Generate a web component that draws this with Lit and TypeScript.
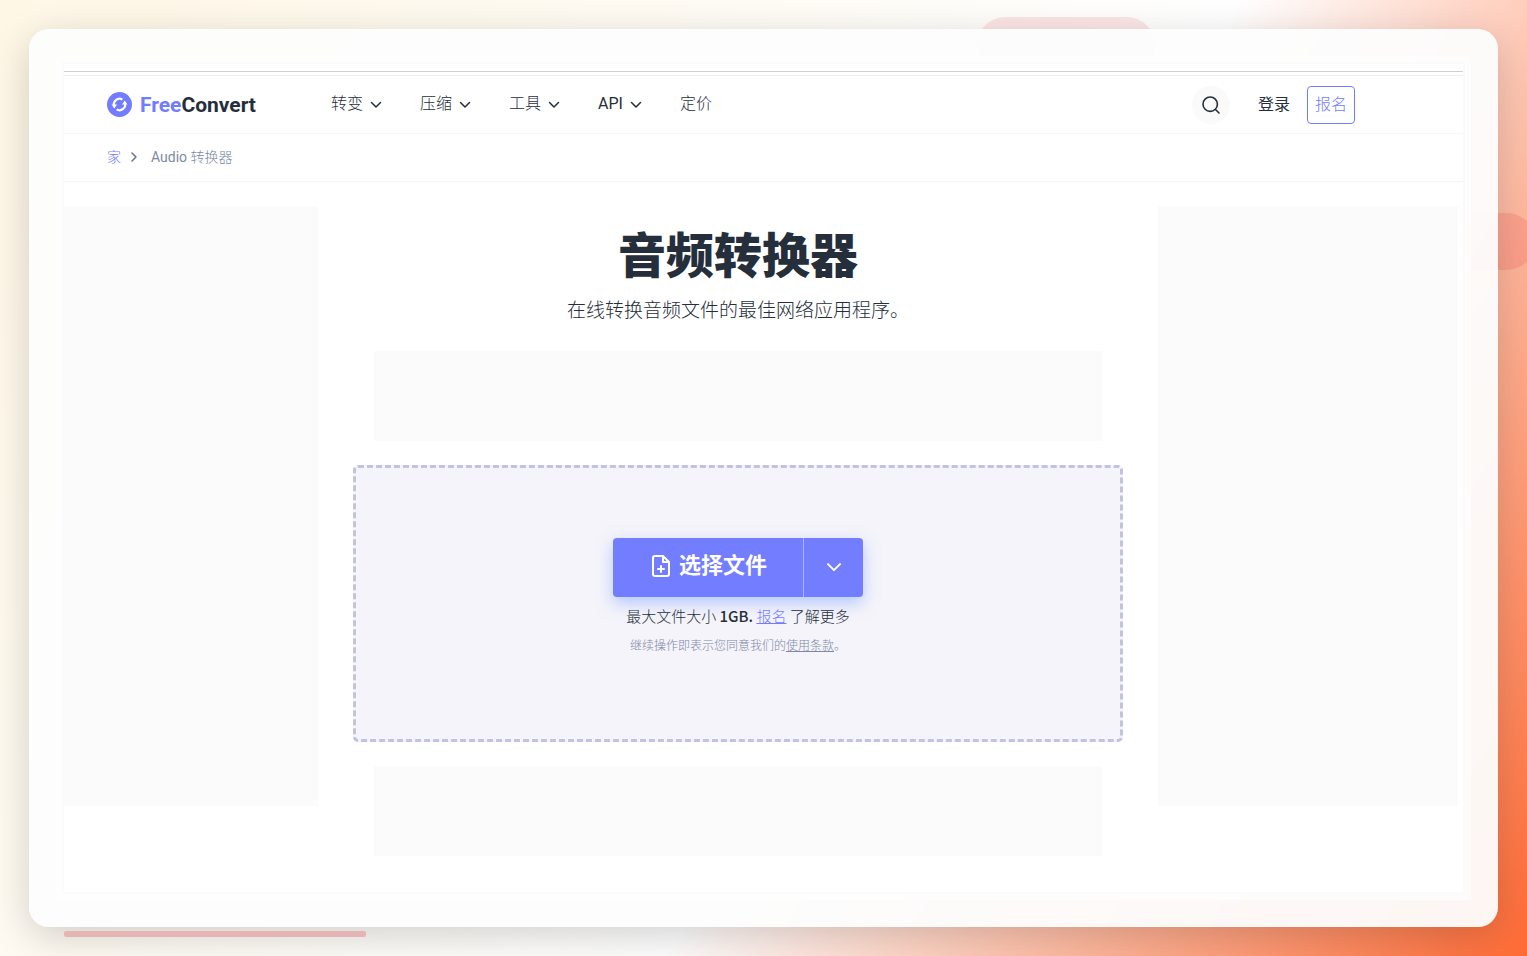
import { LitElement, html, css } from "lit";
import { customElement } from "lit/decorators.js";

const chevron = html`<svg class="chevron" viewBox="0 0 12 8" aria-hidden="true">
  <path d="M1.500 1.500 6 6l4.500-4.500" fill="none" stroke="currentColor" stroke-width="1.500" stroke-linecap="round" stroke-linejoin="round" />
</svg>`;

const menus = [
  { label: "转变", open: true },
  { label: "压缩", open: true },
  { label: "工具", open: true },
  { label: "API", open: true },
  { label: "定价", open: false },
];

@customElement("app-root")
export class AppRoot extends LitElement {
  static styles = css`
    :host {
      display: block;
      font-family: Roboto, "Noto Sans CJK SC", sans-serif;
      font-size: 16px;
      line-height: 24px;
      color: #252e3b;
    }
    *, *::before { box-sizing: border-box; }
    a { color: inherit; text-decoration: none; }
    button { font: inherit; cursor: pointer; }
    .backdrop {
      position: relative;
      overflow: hidden;
      min-height: 100vh;
      display: flex;
      padding: 29px;
      background: linear-gradient(121deg, #fff7e6 0%, #ffffff 59%, #ff6b35 100%);
    }
    .pill {
      position: absolute;
      height: 57px;
      border-radius: 28px;
      background: rgba(233, 88, 98, 0.14);
    }
    .pill-top { left: 64%; top: 17px; width: 178px; }
    .pill-side { right: -8px; top: 213px; width: 120px; background: rgba(240, 80, 80, 0.22); }
    .bar {
      position: absolute;
      left: 64px;
      bottom: 19px;
      width: 302px;
      height: 6px;
      border-radius: 2px;
      background: #e5b5b6;
    }
    .card {
      position: relative;
      flex: 1;
      display: flex;
      padding: 35px;
      border-radius: 20px;
      background: rgba(253, 253, 253, 0.95);
      box-shadow: 0 10px 40px rgba(0, 0, 0, 0.18);
    }
    .page {
      flex: 1;
      min-width: 0;
      padding-top: 7px;
      background: #fff;
      box-shadow: 0 0 0 2px rgba(251, 250, 250, 0.8), 0 0 0 8px rgba(255, 255, 255, 0.6);
    }
    .header {
      border-top: 1px solid #cfd1d1;
      border-bottom: 1px solid #f8f8f9;
    }
    .header-row {
      display: flex;
      align-items: center;
      height: 58px;
      margin-top: 3px;
      padding: 0 108px 0 43px;
      border-top: 1px solid #eeeeef;
    }
    .logo {
      display: flex;
      align-items: center;
      gap: 8px;
      width: 152px;
      margin-right: 72px;
      font-size: 21px;
      font-weight: 700;
      white-space: nowrap;
    }
    .logo-mark { width: 25px; height: 25px; flex: none; }
    .logo-free { color: #727cff; }
    .nav { display: flex; gap: 38px; font-weight: 300; }
    .nav-item { display: flex; align-items: center; gap: 7px; padding-bottom: 2px; white-space: nowrap; }
    .latin { font-weight: 400; }
    .chevron { width: 12px; height: 8px; }
    .nav .chevron { margin-top: 2px; }
    .account { display: flex; align-items: center; margin-left: auto; }
    .search {
      display: flex;
      align-items: center;
      justify-content: center;
      width: 38px;
      height: 38px;
      margin-right: 28px;
      padding: 0;
      border: 0;
      border-radius: 50%;
      background: #fbfafa;
      color: #252e3b;
    }
    .search-icon { width: 20px; height: 20px; }
    .login { margin-right: 17px; }
    .signup {
      width: 48px;
      height: 38px;
      padding: 0;
      border: 1px solid #727cff;
      border-radius: 4px;
      background: #fff;
      color: #727cff;
      font-weight: 300;
    }
    .crumbs {
      display: flex;
      align-items: center;
      height: 48px;
      padding: 0 43px 2px;
      border-bottom: 1px solid #f5f5f6;
      box-shadow: 0 2px 3px rgba(0, 0, 0, 0.01);
      font-size: 14px;
      font-weight: 300;
      color: #7d89a6;
    }
    .crumb-home { color: #727cff; }
    .crumb-arrow { width: 6px; height: 10px; margin: 0 14px 0 10px; }
    .hero {
      display: grid;
      grid-template-columns: 254px minmax(0, 1fr) 300px;
      padding: 24px 5px 0 0;
    }
    .ad { background: #fbfbfb; }
    .ad-side { height: 600px; }
    .ad-wide { width: 728px; max-width: 100%; height: 90px; }
    .main {
      display: flex;
      flex-direction: column;
      align-items: center;
      padding: 21px 35px 0;
    }
    .title { margin: 0; font-size: 48px; line-height: 60px; font-weight: 900; }
    .lead { margin: 9px 0 25px; font-size: 19px; line-height: 30px; font-weight: 300; }
    .drop {
      display: flex;
      flex-direction: column;
      align-items: center;
      width: 100%;
      height: 277px;
      margin: 24px 0;
      padding-top: 70px;
      border: 3px dashed #c2c2e2;
      border-radius: 5px;
      background: #f5f4fa;
    }
    .choose {
      display: flex;
      width: 250px;
      height: 59px;
      border-radius: 4px;
      background: #737dff;
      box-shadow: 0 6px 16px rgba(114, 156, 255, 0.5);
      color: #fff;
    }
    .choose-main, .choose-more {
      display: flex;
      align-items: center;
      justify-content: center;
      padding: 0;
      border: 0;
      background: none;
      color: inherit;
    }
    .choose-main {
      flex: 1;
      gap: 8px;
      padding: 0 0 4px 2px;
      font-size: 22px;
      line-height: 32px;
      font-weight: 700;
    }
    .choose-more { width: 60px; border-left: 1px solid #aeb6ff; }
    .choose-more .chevron { width: 16px; height: 11px; }
    .file-icon { width: 20px; height: 24px; }
    .limit {
      margin: 7px 0 0;
      font-family: "Noto Sans CJK SC", sans-serif;
      font-size: 15px;
      line-height: 24px;
      font-weight: 300;
    }
    .limit-size { font-weight: 500; }
    .limit-link { color: #727cff; text-decoration: underline; }
    .terms { margin: 8px 0 0; font-size: 12px; line-height: 20px; font-weight: 300; color: #7d89a6; }
    .terms-link { text-decoration: underline; }
  `;

  render() {
    return html`
      <div class="backdrop">
        <div class="pill pill-top"></div>
        <div class="pill pill-side"></div>
        <div class="card">
          <div class="page">
            <header class="header">
              <div class="header-row">
                <a class="logo" href="#">
                  <svg class="logo-mark" viewBox="0 0 25 25" aria-hidden="true">
                    <circle cx="12.500" cy="12.500" r="12.500" fill="#727cff" />
                    <g fill="none" stroke="#fff" stroke-width="2.200">
                      <path d="M7.200 14.200a5.600 5.600 0 0 1 8.200-6.600" />
                      <path d="M17.800 10.800a5.600 5.600 0 0 1-8.200 6.600" />
                    </g>
                    <path d="M4.600 12.600h5.400l-2.700 3.800zM20.400 12.400h-5.400l2.700-3.800z" fill="#fff" />
                  </svg>
                  <span><span class="logo-free">Free</span>Convert</span>
                </a>
                <nav class="nav">
                  ${menus.map(
                    (m) => html`<a class="nav-item" href="#"
                      ><span class=${m.label === "API" ? "latin" : ""}>${m.label}</span>${m.open ? chevron : ""}</a
                    >`
                  )}
                </nav>
                <div class="account">
                  <button class="search" aria-label="搜索">
                    <svg class="search-icon" viewBox="0 0 20 20" aria-hidden="true">
                      <g fill="none" stroke="currentColor" stroke-width="1.600" stroke-linecap="round">
                        <circle cx="9.200" cy="9.200" r="7.200" />
                        <path d="m14.500 14.500 3.500 3.500" />
                      </g>
                    </svg>
                  </button>
                  <a class="login" href="#">登录</a>
                  <button class="signup">报名</button>
                </div>
              </div>
            </header>
            <nav class="crumbs">
              <a class="crumb-home" href="#">家</a>
              <svg class="crumb-arrow" viewBox="0 0 6 10" aria-hidden="true">
                <path d="m1 1 4 4-4 4" fill="none" stroke="#66718c" stroke-width="1.500" stroke-linecap="round" stroke-linejoin="round" />
              </svg>
              <span><span class="latin">Audio</span> 转换器</span>
            </nav>
            <div class="hero">
              <div class="ad ad-side"></div>
              <main class="main">
                <h1 class="title">音频转换器</h1>
                <p class="lead">在线转换音频文件的最佳网络应用程序。</p>
                <div class="ad ad-wide"></div>
                <section class="drop">
                  <div class="choose">
                    <button class="choose-main">
                      <svg class="file-icon" viewBox="0 0 20 24" aria-hidden="true">
                        <g fill="none" stroke="currentColor" stroke-width="2" stroke-linecap="round" stroke-linejoin="round">
                          <path d="M12 2H4a2 2 0 0 0-2 2v16a2 2 0 0 0 2 2h12a2 2 0 0 0 2-2V8zM12 2v6h6M10 12v6M7 15h6" />
                        </g>
                      </svg>
                      <span>选择文件</span>
                    </button>
                    <button class="choose-more" aria-label="更多来源">${chevron}</button>
                  </div>
                  <p class="limit">
                    最大文件大小 <span class="limit-size">1GB.</span> <a class="limit-link" href="#">报名</a> 了解更多
                  </p>
                  <p class="terms">继续操作即表示您同意我们的<a class="terms-link" href="#">使用条款</a>。</p>
                </section>
                <div class="ad ad-wide"></div>
              </main>
              <div class="ad ad-side"></div>
            </div>
          </div>
        </div>
        <div class="bar"></div>
      </div>
    `;
  }
}
